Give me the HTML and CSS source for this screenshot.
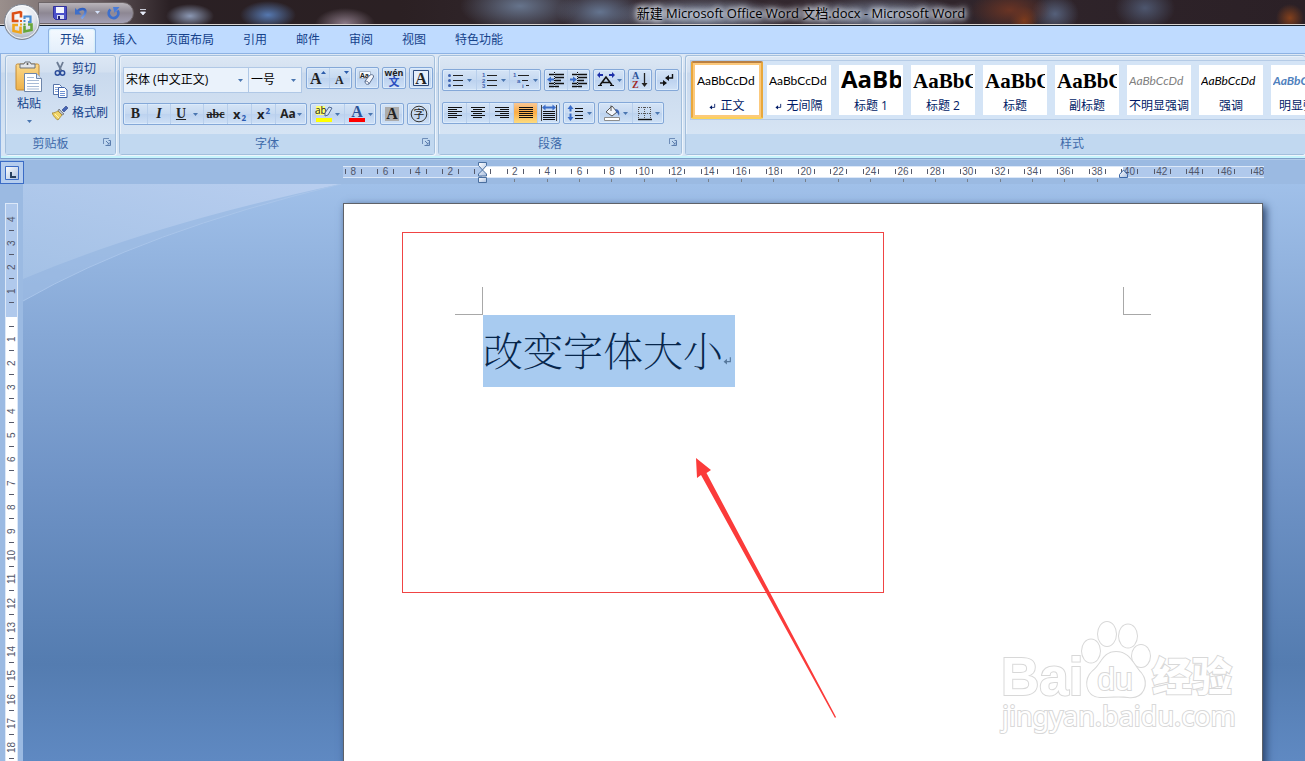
FILE: index.html
```
<!DOCTYPE html>
<html lang="zh-CN">
<head>
<meta charset="utf-8">
<title>新建 Microsoft Office Word 文档.docx - Microsoft Word</title>
<link rel="stylesheet" href="styles.css">
</head>
<body>
<svg class="defs" aria-hidden="true">
  <defs>
    <linearGradient id="steel" x1="0" y1="0" x2="1" y2="1"><stop offset="0" stop-color="#fff"/><stop offset="1" stop-color="#a9bfe0"/></linearGradient>
    <linearGradient id="gold" x1="0" y1="0" x2="0" y2="1"><stop offset="0" stop-color="#fbd98b"/><stop offset="1" stop-color="#eeb14a"/></linearGradient>
    <linearGradient id="blueArrow" x1="0" y1="0" x2="0" y2="1"><stop offset="0" stop-color="#2f5fc0"/><stop offset="1" stop-color="#7ea8ee"/></linearGradient>
    <radialGradient id="orb" cx=".5" cy=".3" r=".7"><stop offset="0" stop-color="#fff"/><stop offset=".55" stop-color="#e2e6ed"/><stop offset="1" stop-color="#a7b0bf"/></radialGradient>
    <symbol id="caret" viewBox="0 0 5 3"><path d="M0 0h5L2.500 3z" fill="#4a76b0"/></symbol>
    <symbol id="launcher" viewBox="0 0 8 8"><path d="M.5 6V.5H6" fill="none" stroke="#6e8db8"/><path d="M2.500 7.500h5v-5h-2M3 3l3 3" fill="none" stroke="#5b7dad"/><path d="M4 6.500h2.500V4z" fill="#5b7dad"/></symbol>
    <symbol id="enter" viewBox="0 0 8 8"><path d="M6.500 1v4H2" fill="none" stroke="currentColor"/><path d="M3.500 2.500v5L.5 5z" fill="currentColor"/></symbol>
  </defs>
</svg>

<header class="titlebar">
  <div class="quick">
    <button class="plain" aria-label="保存"><svg width="14" height="14" viewBox="0 0 14 14"><path d="M.5.500h13v13h-11l-2-2z" fill="#4b50c9" stroke="#31319b"/><path d="M3 1h8v6H3z" fill="#f4f6ff"/><path d="M4 9h7v4H4z" fill="#d9def4"/><path d="M5 10h2v3H5z" fill="#23236e"/></svg></button>
    <button class="plain" aria-label="撤消"><svg width="14" height="14" viewBox="0 0 14 14"><path d="M3 6c3-4 9-4 8.500 0-.3 3-2.500 4.500-4 6.500" fill="none" stroke="url(#blueArrow)" stroke-width="2.400"/><path d="M1 2v6.500h6.500z" fill="#3f6fc8"/></svg></button>
    <svg width="5" height="3" viewBox="0 0 5 3"><path d="M0 0h5L2.500 3z" fill="#d4e2fb"/></svg>
    <button class="plain redo" aria-label="重复"><svg width="14" height="14" viewBox="0 0 14 14"><path d="M3.500 3.500a4.800 4.800 0 1 0 7 1" fill="none" stroke="#3d6fcc" stroke-width="2.800"/><path d="M6 1h6.500l-5 6z" fill="#4a7cd8"/></svg></button>
  </div>
  <button class="plain more" aria-label="自定义快速访问工具栏"><svg width="6" height="7" viewBox="0 0 6 7"><path d="M0 .5h6M.5 3h5L3 6z" stroke="#e8eefa" fill="#e8eefa" stroke-width=".8"/></svg></button>
  <h1 class="doc-title">新建 Microsoft Office Word 文档.docx - Microsoft Word</h1>
</header>
<button class="orb" aria-label="Office 按钮">
  <svg width="38" height="38" viewBox="0 0 38 38"><circle cx="19" cy="19" r="17.500" fill="url(#orb)" stroke="#7d8490"/><circle cx="19" cy="19" r="16.300" fill="none" stroke="#fff" opacity=".8"/>
  <g fill="none" stroke-width="2.600"><path d="M18 14.500V9.500l-1-.5-7 1.500V18h5.500" stroke="#dc4f16"/><path d="M21.500 16v-2.500h6V19H25" stroke="#4a8bd0" stroke-width="2.200"/><path d="M15 22h-4.500v6l7 1.500v-6" stroke="#f0a51c"/><path d="M21.500 23v5.500l7-1.500v-5.500H25" stroke="#67a63a"/></g><path d="M17 17h2v2h-2z" fill="#e05a1a"/><path d="M20.500 17h2v2h-2z" fill="#4a8bd0"/><path d="M17 20.500h2v2h-2z" fill="#f0a51c"/><path d="M20.500 20.500h2v2h-2z" fill="#5a9a35"/></svg>
</button>

<nav class="tabs">
  <a class="tab active" href="#home">开始</a><a class="tab" href="#insert">插入</a><a class="tab" href="#layout">页面布局</a><a class="tab" href="#refs">引用</a><a class="tab" href="#mail">邮件</a><a class="tab" href="#review">审阅</a><a class="tab" href="#view">视图</a><a class="tab" href="#special">特色功能</a>
</nav>

<section class="ribbon" id="home">
  <div class="group clipboard">
    <div class="group-body">
      <button class="paste">
        <svg width="28" height="31" viewBox="0 0 28 31"><rect x="1" y="3" width="23" height="26" rx="1.500" fill="url(#gold)" stroke="#c48a35"/><path d="M5 3h4l1-2h5l1 2h4v4H5z" fill="#e3e6ea" stroke="#6b7078"/><circle cx="12.500" cy="3" r="1" fill="#555"/><path d="M9.500 12.500h12l5 5v13h-17z" fill="#fff" stroke="#6e86aa"/><path d="M21.500 12.500v5h5" fill="#d9e4f4" stroke="#6e86aa"/><path d="M12 16.500h7M12 19.500h12M12 22.500h12M12 25.500h12M12 28h12" stroke="#a8bbd6"/></svg>
        <span>粘贴</span>
        <svg class="caret"><use href="#caret"/></svg>
      </button>
      <div class="clip-list">
        <button class="clip"><svg width="16" height="16" viewBox="0 0 16 16"><path d="M5 1l4.500 9M11 1L7 10" stroke="#6c7c94" stroke-width="1.800" fill="none"/><circle cx="5.500" cy="12" r="2.200" fill="none" stroke="#2b4d9b" stroke-width="1.500"/><circle cx="10.500" cy="12" r="2.200" fill="none" stroke="#2b4d9b" stroke-width="1.500"/></svg>剪切</button>
        <button class="clip"><svg width="16" height="16" viewBox="0 0 16 16"><path d="M1.500 1.500h6l2 2v8h-8z" fill="#fff" stroke="#5674a8"/><path d="M3 4.500h5M3 6.500h5M3 8.500h5" stroke="#8aa6d6"/><path d="M6.500 4.500h6l2.500 2.500v7.500H6.500z" fill="#fff" stroke="#3f62a8"/><path d="M8 8.500h5M8 10.500h5M8 12.500h5" stroke="#6f92d2"/></svg>复制</button>
        <button class="clip"><svg width="16" height="16" viewBox="0 0 16 16"><path d="M10 5l4-4 2 2-4 4z" fill="#4565b5" stroke="#2d3f80" stroke-width=".6"/><path d="M7 4l5 5-2 1-4-4z" fill="#b7bdc8" stroke="#555" stroke-width=".6"/><path d="M6 6l4 4-4 5c-2-1-4-3-6-7 2 0 4-1 6-2z" fill="#f0d468" stroke="#9c7b24" stroke-width=".7"/><path d="M3 9l4 4" stroke="#fff3b5"/></svg>格式刷</button>
      </div>
    </div>
    <div class="group-name"><span>剪贴板</span><button class="plain" aria-label="剪贴板选项"><svg width="8" height="8"><use href="#launcher"/></svg></button></div>
  </div>

  <div class="group font">
    <div class="group-body rows">
      <div class="row">
        <div class="combos">
          <label class="combo family"><select aria-label="字体"><option>宋体 (中文正文)</option></select><svg class="caret"><use href="#caret"/></svg></label>
          <label class="combo size"><select aria-label="字号"><option>一号</option></select><svg class="caret"><use href="#caret"/></svg></label>
        </div>
        <div class="set"><button class="w22" aria-label="增大字体"><svg width="18" height="18" viewBox="0 0 18 18"><text x="1" y="15" class="glyph big">A</text><path d="M12 5l2.500-3L17 5z" fill="#2c5cab"/></svg></button><button class="w22" aria-label="缩小字体"><svg width="18" height="18" viewBox="0 0 18 18"><text x="3" y="15" class="glyph small">A</text><path d="M12 2h5l-2.500 3z" fill="#2c5cab"/></svg></button></div>
        <div class="set"><button class="w22" aria-label="清除格式"><svg width="18" height="18" viewBox="0 0 18 18"><path d="M1.500 2.500h11v7h-11z" fill="#f8fbff" stroke="#a9b8cc"/><text x="2" y="9" class="glyph sans7">Aa</text><path d="M7 12l5-6c2-1 4 0 3.500 2L11 15c-2 1-4 0-4-3z" fill="#f5f7fc" stroke="#5c6f90"/><path d="M7 12c2 0 4 1 4 3" fill="none" stroke="#5c6f90"/></svg></button></div>
        <div class="set"><button class="w22" aria-label="拼音指南"><svg width="20" height="20" viewBox="0 0 20 20"><text x="10" y="8" text-anchor="middle" class="glyph wen">wén</text><text x="10" y="18" text-anchor="middle" class="glyph han">文</text></svg></button></div>
        <div class="set"><button class="w22" aria-label="字符边框"><svg width="18" height="18" viewBox="0 0 18 18"><path d="M1.500 1.500h15v15h-15z" fill="#e4eefa" stroke="#2c4a7c"/><text x="9" y="14.500" text-anchor="middle" class="glyph big">A</text></svg></button></div>
      </div>
      <div class="row">
        <div class="set"><button class="w23 serif bold">B</button><button class="w23 serif italic">I</button><button class="w33 serif under"><u>U</u><svg class="caret"><use href="#caret"/></svg></button><button class="w24 serif strike"><s>abc</s></button><button class="w24 sub">x<sub>2</sub></button><button class="w24 sub">x<sup>2</sup></button><button class="w31 aa">Aa<svg class="caret"><use href="#caret"/></svg></button></div>
        <div class="set"><button class="w33" aria-label="突出显示"><svg width="18" height="18" viewBox="0 0 18 18"><path d="M1 1h9v9H1z" fill="#ffff72"/><text x="0" y="9" class="glyph ab">ab</text><path d="M10 8l4-6 3 1-4 7-3 1z" fill="#d5e2f4" stroke="#4e6995"/><path d="M1 13h16v4H1z" fill="#ff0"/></svg><svg class="caret"><use href="#caret"/></svg></button><button class="w31" aria-label="字体颜色"><svg width="18" height="18" viewBox="0 0 18 18"><text x="9" y="12" text-anchor="middle" class="glyph big blue">A</text><path d="M1 13h16v4H1z" fill="#f00"/></svg><svg class="caret"><use href="#caret"/></svg></button></div>
        <div class="set push"><button class="w22" aria-label="字符底纹"><svg width="18" height="18" viewBox="0 0 18 18"><path d="M2 2h14v14H2z" fill="#acacac"/><text x="9" y="14" text-anchor="middle" class="glyph big">A</text></svg></button></div>
        <div class="set"><button class="w22" aria-label="带圈字符"><svg width="18" height="18" viewBox="0 0 18 18"><circle cx="9" cy="9" r="7.800" fill="none" stroke="#333"/><text x="9" y="13" text-anchor="middle" class="glyph zi">字</text></svg></button></div>
      </div>
    </div>
    <div class="group-name"><span>字体</span><button class="plain" aria-label="字体选项"><svg width="8" height="8"><use href="#launcher"/></svg></button></div>
  </div>

  <div class="group para">
    <div class="group-body rows">
      <div class="row">
        <div class="set"><button class="w33" aria-label="项目符号"><svg width="18" height="18" viewBox="0 0 18 18"><path d="M6 4.500h10M6 9.500h10M6 14.500h10" stroke="#222"/><circle cx="2.500" cy="4.500" r="1.500" fill="#3e63b0"/><circle cx="2.500" cy="9.500" r="1.500" fill="#3e63b0"/><circle cx="2.500" cy="14.500" r="1.500" fill="#3e63b0"/></svg><svg class="caret"><use href="#caret"/></svg></button><button class="w33" aria-label="编号"><svg width="18" height="18" viewBox="0 0 18 18"><path d="M6 4.500h10M6 9.500h10M6 14.500h10" stroke="#222"/><text class="glyph num" x="1" y="6">1</text><text class="glyph num" x="1" y="12">2</text><text class="glyph num" x="1" y="17">3</text></svg><svg class="caret"><use href="#caret"/></svg></button><button class="w31" aria-label="多级列表"><svg width="18" height="18" viewBox="0 0 18 18"><path d="M5 4.500h11M9 9.500h6M13 14.500h3" stroke="#222"/><text class="glyph num" x="0" y="6">1</text><text class="glyph num" x="4" y="12">a</text><text class="glyph num" x="9" y="17">i</text></svg><svg class="caret"><use href="#caret"/></svg></button></div>
        <div class="set"><button class="w22" aria-label="减少缩进量"><svg width="18" height="16" viewBox="0 0 18 16"><path d="M2 2.500h5M8 2.500h9M8 5.500h9M8 8.500h6M2 11.500h5M8 11.500h9M2 14.500h5M8 14.500h4" stroke="#111" stroke-width="1.300"/><path d="M7.500 0v16" stroke="#111" stroke-dasharray="1 1"/><path d="M0 7.500l4-3v2h3v2H4v2z" fill="#3a6cc8"/></svg></button><button class="w22" aria-label="增加缩进量"><svg width="18" height="16" viewBox="0 0 18 16"><path d="M2 2.500h5M8 2.500h9M8 5.500h9M8 8.500h6M2 11.500h5M8 11.500h9M2 14.500h5M8 14.500h4" stroke="#111" stroke-width="1.300"/><path d="M7.500 0v16" stroke="#111" stroke-dasharray="1 1"/><path d="M7 7.500l-4-3v2H0v2h3v2z" fill="#3a6cc8"/></svg></button></div>
        <div class="set"><button class="w30" aria-label="中文版式"><svg width="18" height="16" viewBox="0 0 18 16"><path d="M3 13l6-8 6 8M5.500 10.500h7" fill="none" stroke="#111" stroke-width="1.600"/><path d="M1 13.500h4M13 13.500h4" stroke="#111"/><path d="M0 3l3-3v2h3v2H3v2zM18 3l-3-3v2h-3v2h3v2z" fill="#1d2fa8"/></svg><svg class="caret"><use href="#caret"/></svg></button></div>
        <div class="set"><button class="w22" aria-label="排序"><svg width="18" height="18" viewBox="0 0 18 18"><text x="1" y="8" class="glyph az blue">A</text><text x="1" y="17" class="glyph az red">Z</text><path d="M13.500 2v12" stroke="#222" stroke-width="1.300"/><path d="M10.500 12h6l-3 4z" fill="#222"/></svg></button></div>
        <div class="set"><button class="w22" aria-label="显示编辑标记"><svg width="16" height="16" viewBox="0 0 16 16"><path d="M13.500 2v4H8" fill="none" stroke="#111" stroke-width="1.400"/><path d="M10 3v6L6 6zM4 8v6l4-3z" fill="#111"/><path d="M1 11h4" stroke="#111" stroke-width="1.400"/></svg></button></div>
      </div>
      <div class="row">
        <div class="set"><button class="w23" aria-label="左对齐"><svg width="16" height="14" viewBox="0 0 16 14"><path d="M1 1.500h14M1 3.500h9M1 5.500h14M1 7.500h9M1 9.500h14M1 11.500h9" stroke="#111"/></svg></button><button class="w23" aria-label="居中"><svg width="16" height="14" viewBox="0 0 16 14"><path d="M1 1.500h14M3 3.500h9M1 5.500h14M3 7.500h9M1 9.500h14M3 11.500h9" stroke="#111"/></svg></button><button class="w24" aria-label="右对齐"><svg width="16" height="14" viewBox="0 0 16 14"><path d="M1 1.500h14M6 3.500h9M1 5.500h14M6 7.500h9M1 9.500h14M6 11.500h9" stroke="#111"/></svg></button><button class="w24 on" aria-label="两端对齐"><svg width="16" height="14" viewBox="0 0 16 14"><path d="M1 1.500h14M1 3.500h14M1 5.500h14M1 7.500h14M1 9.500h14M1 11.500h14" stroke="#111"/></svg></button><button class="w22" aria-label="分散对齐"><svg width="18" height="18" viewBox="0 0 18 18"><path d="M1.500 1v16M16.500 1v16" stroke="#444"/><path d="M3 7.500h12M3 9.500h12M3 11.500h12M3 13.500h12M3 15.500h12" stroke="#111"/><path d="M2 3.500l3.500-3v2h7v-2l3.500 3-3.500 3v-2h-7v2z" fill="#3a6cc8"/></svg></button></div>
        <div class="set"><button class="w30" aria-label="行距"><svg width="18" height="18" viewBox="0 0 18 18"><path d="M8 4.500h8M8 7.500h8M8 11.500h8M8 14.500h8" stroke="#111"/><path d="M3.500 1l3 4h-2v8h2l-3 4-3-4h2V5h-2z" fill="#3a6cc8"/><path d="M1 8.500h5" stroke="#cfe0f5" stroke-width="2"/></svg><svg class="caret"><use href="#caret"/></svg></button></div>
        <div class="set"><button class="w33" aria-label="底纹"><svg width="18" height="18" viewBox="0 0 18 18"><path d="M3 8l6-6 5 6-5 4z" fill="#f4f7fc" stroke="#555"/><path d="M8 7V1.500" stroke="#555"/><path d="M12 5c4 0 5 3 4 7-1-2-1-3-3-4z" fill="#3d64b2"/><path d="M1.500 13.500h15v3h-15z" fill="#fff" stroke="#8d8d8d"/></svg><svg class="caret"><use href="#caret"/></svg></button><button class="w31" aria-label="边框"><svg width="16" height="16" viewBox="0 0 16 16"><path d="M1.500 2v12M7.500 2v12M13.500 2v12M2 2.500h12M2 8.500h12" stroke="#555" stroke-dasharray="1 1" fill="none"/><path d="M1 14.500h14" stroke="#111" stroke-width="1.400"/></svg><svg class="caret"><use href="#caret"/></svg></button></div>
      </div>
    </div>
    <div class="group-name"><span>段落</span><button class="plain" aria-label="段落选项"><svg width="8" height="8"><use href="#launcher"/></svg></button></div>
  </div>

  <div class="group styles">
    <div class="gallery">
      <button class="style selected"><span class="sample">AaBbCcDd</span><span class="label"><svg width="7" height="7"><use href="#enter"/></svg>正文</span></button>
      <button class="style"><span class="sample">AaBbCcDd</span><span class="label"><svg width="7" height="7"><use href="#enter"/></svg>无间隔</span></button>
      <button class="style"><span class="sample h1">AaBb</span><span class="label">标题 1</span></button>
      <button class="style"><span class="sample h2">AaBbC</span><span class="label">标题 2</span></button>
      <button class="style"><span class="sample h2">AaBbC</span><span class="label">标题</span></button>
      <button class="style"><span class="sample h2">AaBbC</span><span class="label">副标题</span></button>
      <button class="style"><span class="sample em gray">AaBbCcDd</span><span class="label">不明显强调</span></button>
      <button class="style"><span class="sample em">AaBbCcDd</span><span class="label">强调</span></button>
      <button class="style"><span class="sample em strong">AaBbCcDd</span><span class="label">明显强调</span></button>
    </div>
    <div class="group-name"><span>样式</span></div>
  </div>
</section>

<div class="ruler-row">
  <button class="tabstop" aria-label="左对齐式制表符"><svg width="14" height="14" viewBox="0 0 14 14"><path d="M.5.500h13v13H.5z" fill="url(#steel)" stroke="#3b6cc6"/><path d="M5 6h2v4h4v2H5z" fill="#27405f"/></svg></button>
  <div class="hruler">
    <div class="scale"><i>8</i><i>6</i><i>4</i><i>2</i><i></i><i class="in">2</i><i class="in">4</i><i class="in">6</i><i class="in">8</i><i class="in">10</i><i class="in">12</i><i class="in">14</i><i class="in">16</i><i class="in">18</i><i class="in">20</i><i class="in">22</i><i class="in">24</i><i class="in">26</i><i class="in">28</i><i class="in">30</i><i class="in">32</i><i class="in">34</i><i class="in">36</i><i class="in">38</i><i>40</i><i>42</i><i>44</i><i>46</i><i>48</i></div>
    <svg class="indent left" width="11" height="22" viewBox="0 0 11 22"><path d="M1.500.500h8v3L5.500 8l4 4v2h-8v-2l4-4-4-4.500z" fill="url(#steel)" stroke="#4a6f9f"/><path d="M1.500 15.500h8v5h-8z" fill="url(#steel)" stroke="#4a6f9f"/></svg>
    <svg class="indent right" width="11" height="9" viewBox="0 0 11 9"><path d="M1.500 8.500v-3L5.500 1l4 4.500v3z" fill="url(#steel)" stroke="#3d68a6"/></svg>
  </div>
</div>

<main class="workspace">
  <div class="vruler"><div class="vscale"><i>4</i><i>3</i><i>2</i><i>1</i><i></i><i>1</i><i>2</i><i>3</i><i>4</i><i>5</i><i>6</i><i>7</i><i>8</i><i>9</i><i>10</i><i>11</i><i>12</i><i>13</i><i>14</i><i>15</i><i>16</i><i>17</i><i>18</i><i>19</i></div></div>
  <div class="canvas">
    <svg class="swoosh" width="320" height="118" viewBox="0 0 320 118"><defs><linearGradient id="sw" x1="0" y1="1" x2="1" y2="0"><stop offset="0" stop-color="#a5c2e6"/><stop offset="1" stop-color="#bdd1f1"/></linearGradient></defs><path d="M0 0h318Q120 48 0 117z" fill="#a3c0e6" opacity=".55"/><path d="M0 0h318Q130 40 0 95z" fill="url(#sw)" opacity=".85"/><path d="M318 0Q120 48 0 117" fill="none" stroke="#a9c5ea"/></svg>
    <article class="page">
      <span class="crop tl"></span><span class="crop tr"></span>
      <p class="line"><span class="picked">改变字体大小<svg width="9" height="9"><use href="#enter"/></svg></span></p>
      <div class="callout"></div>
      <svg class="arrow" width="142" height="261" viewBox="0 0 142 261"><path d="M1 0l15 12-4.500 3L141 259l-1 1L6 17l-4 3z" fill="#fb3b3a"/></svg>
      <svg class="mark" width="250" height="124" viewBox="0 0 250 124"><g class="ink">
        <text x="0" y="79" class="bai">Bai</text>
        <ellipse cx="90" cy="35" rx="9" ry="11.500"/><ellipse cx="106" cy="18" rx="9" ry="12"/><ellipse cx="127" cy="20" rx="9" ry="11.500"/><ellipse cx="140" cy="40" rx="9" ry="11"/>
        <path d="M115 36c-13 0-14 12-23 19-9 8-8 25 7 26 8 0 20-1 28 0 16 2 21-14 13-24-8-8-11-21-25-21z"/>
        <text x="114" y="74" text-anchor="middle" class="du">du</text>
        <text x="151" y="75" class="jy">经验</text>
        <text x="1" y="110" class="url">jingyan.baidu.com</text></g></svg>
    </article>
  </div>
</main>
</body>
</html>
```
FILE: styles.css
```
* { box-sizing: border-box; }
body {
  margin: 0; height: 100vh; overflow: hidden; display: flex; flex-direction: column;
  font: 12px/16px "Open Sans", "Noto Sans CJK SC", sans-serif; color: #15428b; background: #9bbae2;
}
button { font: inherit; color: inherit; border: 0; padding: 0; margin: 0; background: none; }
svg { display: block; flex: none; }
.defs { position: absolute; width: 0; height: 0; }
.caret { width: 5px; height: 3px; }
.plain { display: flex; }

.titlebar {
  flex: none; height: 26px; display: flex; align-items: center; overflow: hidden;
  border-bottom: 1px solid #14202e; box-shadow: inset 0 -1px #d8d2cf;
  background:
    radial-gradient(ellipse 24px 12px at 190px 16px, #8b98b4, transparent),
    radial-gradient(ellipse 28px 14px at 268px 15px, #5578b0, transparent),
    radial-gradient(ellipse 30px 16px at 345px 24px, #8d7c8a, transparent),
    radial-gradient(ellipse 60px 26px at 520px 6px, #66748c, transparent),
    radial-gradient(ellipse 44px 22px at 600px 12px, #64748f, transparent),
    radial-gradient(ellipse 90px 20px at 700px 16px, #7e8ba2, transparent),
    radial-gradient(ellipse 90px 20px at 880px 16px, #76829a, transparent),
    radial-gradient(ellipse 40px 20px at 1010px 10px, #6a3424, transparent),
    radial-gradient(ellipse 24px 20px at 1055px 14px, #55607a, transparent),
    radial-gradient(ellipse 30px 22px at 1145px 8px, #4d566e, transparent),
    radial-gradient(ellipse 14px 14px at 1024px 20px, #8a4018, transparent),
    radial-gradient(ellipse 14px 14px at 1290px 18px, #83401c, transparent),
    linear-gradient(90deg, #9a8f8c, #64585c 100px, #2a2024 170px, #2b2023 400px, #352a31 600px, #2b2026);
}
.quick {
  flex: none; width: 96px; height: 22px; margin-left: 38px; padding-left: 14px; display: flex; align-items: center; gap: 7px;
  border: 1px solid #6d6568; border-radius: 0 11px 11px 0; background: linear-gradient(#b9b4ba, #8d8793 50%, #a3a0b4);
}
.more { margin-left: 6px; }
.doc-title {
  flex: 1; margin: 0 0 0 151px; text-align: center; font-size: 13px; font-weight: 400; line-height: 20px; color: #000;
  text-shadow: 0 0 5px #dfe3ec, 0 0 6px #dfe3ec, 0 0 8px #d5dae4, 0 0 10px #c3c9d6;
}
.orb { position: absolute; left: 3px; top: 3px; z-index: 2; }

.tabs { flex: none; height: 27px; padding: 2px 0 0 48px; display: flex; gap: 5px; background: #bfdbff; }
.tab { padding: 4px 12px 0; color: #15428b; text-decoration: none; }
.tab.active {
  padding: 3px 11px 0; border: 1px solid #8db2e3; border-bottom: 0; border-radius: 3px 3px 0 0;
  background: linear-gradient(#f4f9ff, #e3eefb); box-shadow: inset 0 0 2px #a8e6f4;
}

.ribbon {
  flex: none; height: 106px; padding: 1px 0 3px 4px; display: flex; gap: 3px; color: #15428b;
  border-top: 1px solid #8db2e3; border-bottom: 1px solid #7f9fc8; border-left: 1px solid #8db2e3; box-shadow: inset 0 -2px #c6f4fc;
  background: linear-gradient(#dde8f5, #d3e0f0 18px, #c9d9ed 19px, #d8e6f5 90px);
}
.group { display: flex; flex-direction: column; justify-content: space-between; flex: none; border: 1px solid #a3bfdc; border-radius: 3px; box-shadow: 1px 1px #eef5fc, inset 1px 1px #e8f0f9; }
.clipboard { width: 111px; }
.font { width: 316px; }
.para { width: 244px; }
.styles { flex: 1; min-width: 0; border-right: 0; }
.group-body { display: flex; }
.group-name { height: 20px; display: flex; align-items: center; padding: 0 4px 0 0; background: #c1d8f0; color: #3e6aaa; }
.group-name span { flex: 1; margin: 0 8px 0 0; text-align: center; }
.group-name .plain { margin-bottom: 4px; }
.styles .group-name { padding-left: 165px; }
.paste { width: 46px; padding-top: 5px; display: flex; flex-direction: column; align-items: center; }
.paste span { margin-top: 4px; }
.paste .caret { margin-top: 8px; }
.clip-list { padding-top: 2px; }
.clip { display: flex; align-items: center; gap: 4px; height: 22px; }

.rows { flex-direction: column; gap: 14px; padding: 11px 3px 0; }
.para .rows { gap: 11px; padding-top: 13px; }
.row { display: flex; gap: 3px; height: 22px; }
.combos { display: flex; margin-right: 1px; height: 26px; }
.combo { display: flex; align-items: center; border: 1px solid #b0c8e6; background: #eaf2fb; padding-right: 5px; }
.combo + .combo { border-left: 0; }
.combo select { appearance: none; flex: 1; border: 0; background: none; padding: 0 0 0 2px; font: inherit; color: #000; min-width: 0; }
.family { width: 126px; }
.size { width: 53px; }
.set { display: flex; border: 1px solid #84a8d8; border-radius: 2px; background: linear-gradient(#d5e4f6, #c6d9f1 48%, #bcd2ef 50%, #cfe1f6); box-shadow: inset 0 0 0 1px #dcebfb; }
.set button { display: flex; align-items: center; justify-content: center; gap: 2px; color: #222; }
.set button + button { border-left: 1px solid #b8cfec; }
.push { margin-left: auto; }
.w22 { width: 22px; } .w23 { width: 23px; } .w24 { width: 24px; } .w30 { width: 30px; } .w31 { width: 31px; } .w33 { width: 33px; }
.set .on { background: linear-gradient(#f8c896, #fbac45 45%, #fddc80); }
.set .serif { font-family: "Liberation Serif", serif; font-weight: 700; font-size: 14px; }
.set .italic { font-style: italic; }
.set .under { gap: 7px; }
.set .strike { font-size: 12px; }
.set .sub { font-family: "Open Sans", sans-serif; font-weight: 700; font-size: 13px; gap: 1px; }
.sub sub, .sub sup { font-size: 8px; line-height: 8px; color: #2a5ab0; }
.sub sub { align-self: flex-end; margin-bottom: 2px; } .sub sup { align-self: flex-start; margin-top: 3px; }
.set .aa { font-weight: 700; gap: 1px; }
.glyph { font-family: "Liberation Serif", serif; font-weight: 700; fill: #222; }
.glyph.big { font-size: 16px; } .glyph.small { font-size: 12px; }
.glyph.sans7 { font: 700 7px "Open Sans", sans-serif; }
.glyph.wen { font: 700 9px "Open Sans", sans-serif; }
.glyph.han { font: 700 11px "Noto Sans CJK SC", sans-serif; fill: #2a4fc0; }
.glyph.zi { font: 11px "Noto Sans CJK SC", sans-serif; }
.glyph.ab { font: 10px "Open Sans", sans-serif; }
.glyph.num { font: 700 6px "Liberation Sans", sans-serif; fill: #3e63b0; }
.glyph.az { font-size: 10px; }
.glyph.blue { fill: #2c5398; } .glyph.red { fill: #a02828; }

.gallery { margin: 4px 0 0 4px; height: 60px; display: flex; overflow: hidden; border: 1px solid #b5cbe6; border-right: 0; background: #d4e4f6; }
.style { flex: none; width: 72px; height: 58px; padding: 4px; display: flex; flex-direction: column; background: #fff content-box; color: #001a66; }
.selected { border: 2px solid #e9a83c; border-top-color: #b98043; border-bottom-color: #fbd25a; border-radius: 2px; padding: 2px; box-shadow: inset 0 0 0 2px #fcc97c; }
.sample { display: block; width: 60px; height: 32px; margin: 0 2px; overflow: hidden; font: 12px/31px Lato, sans-serif; color: #000; white-space: nowrap; text-align: left; }
.h1 { font: 700 24px/28px "Open Sans", sans-serif; }
.h2 { font: 700 21px/32px "Liberation Serif", serif; }
.em { font-style: italic; } .gray { color: #808080; } .strong { font-weight: 700; color: #4f81bd; }
.label { display: flex; align-items: center; justify-content: center; gap: 4px; white-space: nowrap; line-height: 18px; }

.ruler-row { flex: none; height: 25px; padding: 1px 0 0; display: flex; border-top: 1px solid #b3cbea; }
.tabstop { flex: none; width: 24px; height: 23px; display: flex; align-items: center; justify-content: center; border: 1px solid #3b6cc6; background: #b5cdee; }
.hruler {
  position: relative; width: 921px; height: 12px; margin: 5px 0 0 319px;
  background: linear-gradient(90deg, #b0c9ec 139px, #fff 139px, #fff 780px, #b0c9ec 780px);
  box-shadow: inset 0 1px #dce8f8, inset 0 -1px #dce8f8;
}
.scale { display: flex; height: 16px; margin: 0 -11px 0 -6px; clip-path: inset(0 11px 0 6px); }
.scale i { flex: 1; display: flex; align-items: flex-start; justify-content: center; font: 10px/12px "Liberation Sans", sans-serif; color: #50566a; position: relative; }
.scale i::before, .scale i::after { content: ""; position: absolute; top: 3px; width: 1px; height: 5px; background: #55596a; }
.scale i::before { left: 25%; } .scale i::after { right: 23%; }
.scale .in { background: linear-gradient(#77808c, #77808c) center bottom / 1px 3px no-repeat; }
.indent { position: absolute; }
.indent.left { left: 134px; top: -4px; } .indent.right { left: 775px; top: 3px; }

.workspace { flex: 1; min-height: 0; display: flex; }
.vruler { flex: none; width: 23px; padding: 19px 5px 0; overflow: hidden; }
.vscale { border: 1px solid #dce8f8; background: linear-gradient(#b0c9ec 113px, #fff 113px); padding-top: 3px; width: 13px; }
.vscale i { display: flex; align-items: center; justify-content: center; width: 11px; height: 24px; writing-mode: vertical-rl; transform: rotate(180deg); font: 10px/11px "Liberation Sans", sans-serif; color: #50566a; position: relative; }
.vscale i::before { content: ""; position: absolute; top: 0; left: 3px; width: 5px; height: 1px; background: #55596a; }
.canvas { position: relative; flex: 1; min-width: 0; overflow: hidden; padding: 19px 0 0 320px; background: linear-gradient(#a0c0e9, #86a8d6 150px, #6f93c6 300px, #547cb0 480px, #5f89c2); }
.swoosh { position: absolute; left: 0; top: 0; }
.page { position: relative; width: 920px; height: 1300px; padding: 111px 139px; background: #fff; border: 1px solid #5f6268; box-shadow: 3px 3px 8px #2a436b; }
.crop { position: absolute; width: 28px; height: 28px; top: 83px; border: 0 solid #a8a8a8; border-bottom-width: 1px; }
.tl { left: 111px; border-right-width: 1px; } .tr { left: 779px; border-left-width: 1px; }
.line { margin: 0; display: flex; }
.picked { display: flex; align-items: center; height: 72px; padding: 0 3px 5px 0; background: #a8cbf0; color: #07264b; font: 200 40px/66px "Noto Serif CJK SC", "Noto Sans CJK SC", serif; }
.picked svg { margin-top: 24px; color: #56789c; }
.callout { position: absolute; left: 58px; top: 28px; width: 482px; height: 361px; border: 1px solid #f04444; }
.arrow { position: absolute; left: 351px; top: 254px; }
.mark { position: absolute; left: 657px; top: 412px; overflow: visible; }
.ink { fill: #fff; stroke: #d8d8d8; stroke-width: 2px; paint-order: stroke; }
.bai { font: 700 53px "Liberation Sans", sans-serif; }
.du { font: 32px "Liberation Sans", sans-serif; }
.jy { font: 900 40px "Noto Sans CJK SC", sans-serif; }
.url { font: 27px "Noto Sans", sans-serif; }
```
